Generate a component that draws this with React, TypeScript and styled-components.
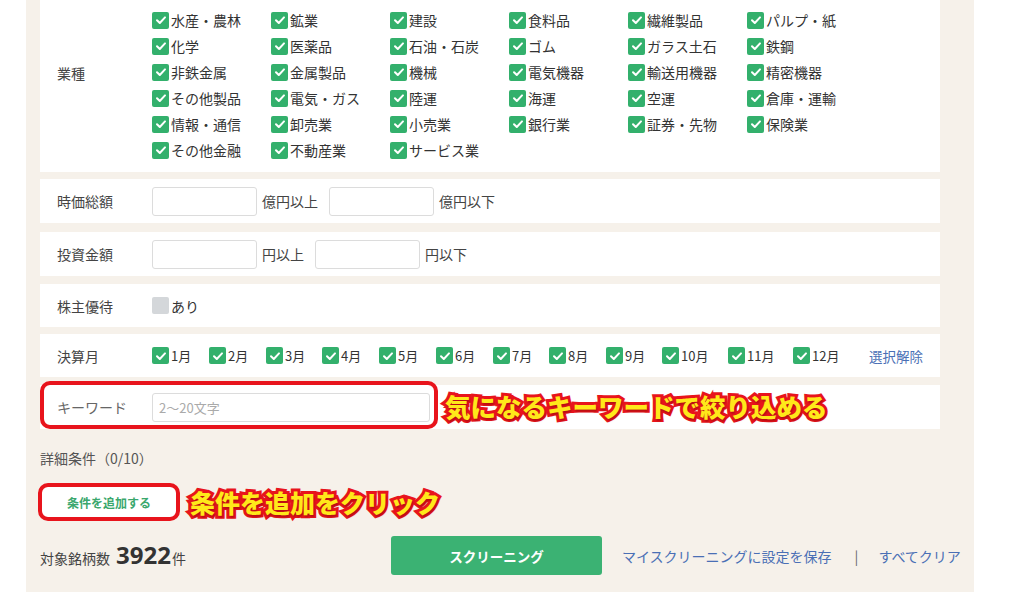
import styled, { createGlobalStyle } from "styled-components";

const GlobalStyle = createGlobalStyle`
  html, body {
    margin: 0;
    padding: 0;
    background: #ffffff;
    font-family: "Noto Sans CJK JP", "Noto Sans", sans-serif;
    color: #333333;
  }
`;

const Page = styled.div`
  width: 1024px;
  height: 606px;
  overflow: hidden;
  padding-left: 26px;
  box-sizing: border-box;
`;

const Panel = styled.div`
  width: 948px;
  height: 592px;
  background: #f6f1ea;
  padding: 0 34px 0 14px;
  box-sizing: border-box;
  display: flex;
  flex-direction: column;
`;

const Box = styled.div<{ $h?: number; $mt?: number }>`
  position: relative;
  background: #ffffff;
  display: flex;
  align-items: center;
  flex: 0 0 auto;
  height: ${({ $h }) => ($h ? `${$h}px` : "44px")};
  margin-top: ${({ $mt }) => ($mt !== undefined ? `${$mt}px` : "8px")};
  padding-left: 17px;
  box-sizing: border-box;
`;

const Label = styled.div<{ $muted?: boolean }>`
  width: 95px;
  flex: 0 0 95px;
  font-size: 14px;
  color: ${({ $muted }) => ($muted ? "#666666" : "#444444")};
`;

const IndustryGrid = styled.div`
  display: grid;
  grid-template-columns: repeat(6, 119px);
  grid-auto-rows: 26px;
  align-items: center;
  align-self: flex-start;
  padding-top: 33px;
`;

const CheckItem = styled.label`
  display: flex;
  align-items: center;
  font-size: 14px;
  color: #333333;
  white-space: nowrap;
`;

const Box16 = styled.span<{ $on?: boolean }>`
  display: inline-flex;
  align-items: center;
  justify-content: center;
  width: 17px;
  height: 17px;
  border-radius: 2px;
  background: ${({ $on }) => ($on ? "#33b06c" : "#d4d7da")};
  margin-right: 2px;
  flex: 0 0 17px;
`;

const MonthRow = styled.div`
  display: flex;
  align-items: center;
`;

const MonthItem = styled(CheckItem)<{ $w: number }>`
  width: ${({ $w }) => $w}px;
  font-size: 13px;
`;

const Clear = styled.a`
  margin-left: 20px;
  font-size: 13.5px;
  color: #4a6fb5;
  cursor: pointer;
`;

const NumInput = styled.input<{ $w?: number }>`
  width: ${({ $w }) => ($w ? `${$w}px` : "105px")};
  height: 29px;
  border: 1px solid #dcdcdc;
  border-radius: 3px;
  box-sizing: border-box;
  padding: 0 6px;
  font-family: inherit;
  font-size: 13px;
  color: #333;
  &::placeholder {
    color: #aaaaaa;
  }
`;

const Unit = styled.span`
  font-size: 14px;
  color: #444444;
  margin: 0 11px 0 5px;
`;

const Ring = styled.div<{ $w: number; $h: number; $l: number; $t: number }>`
  position: absolute;
  left: ${({ $l }) => $l}px;
  top: ${({ $t }) => $t}px;
  width: ${({ $w }) => $w}px;
  height: ${({ $h }) => $h}px;
  border: 4px solid #e8141c;
  border-radius: 10px;
  box-sizing: border-box;
  pointer-events: none;
`;

const Callout = styled.div<{ $l: number; $t: number; $size: number }>`
  position: absolute;
  left: ${({ $l }) => $l}px;
  top: ${({ $t }) => $t}px;
  font-family: "Noto Sans CJK JP", sans-serif;
  font-weight: 900;
  font-size: ${({ $size }) => $size}px;
  line-height: 1;
  color: #ffe81a;
  -webkit-text-stroke: 6px #e8141c;
  paint-order: stroke fill;
  text-shadow: 1px 2px 2px rgba(90, 0, 0, 0.35);
  white-space: nowrap;
  pointer-events: none;
`;

const SubTitle = styled.div`
  margin-top: 19px;
  font-size: 14px;
  color: #555555;
`;

const AddRow = styled.div`
  position: relative;
  margin-top: 17px;
  height: 34px;
`;

const AddButton = styled.button`
  width: 138px;
  height: 34px;
  background: #ffffff;
  border: none;
  border-radius: 8px;
  color: #3aa76d;
  font-family: inherit;
  font-size: 12px;
  font-weight: 700;
  cursor: pointer;
`;

const Footer = styled.div`
  margin-top: 17px;
  display: flex;
  align-items: center;
`;

const Count = styled.div`
  flex: 0 0 351px;
  display: flex;
  align-items: baseline;
  font-size: 14px;
  color: #444444;
  b {
    font-family: "Open Sans", "Noto Sans", sans-serif;
    font-size: 24px;
    font-weight: 700;
    line-height: 1;
    color: #333333;
    margin-left: 6px;
    margin-right: 1px;
  }
  span {
    font-size: 14px;
  }
`;

const ScreenButton = styled.button`
  flex: 0 0 211px;
  height: 39px;
  background: #3bb273;
  border: none;
  border-radius: 3px;
  color: #ffffff;
  font-family: inherit;
  font-size: 13.5px;
  font-weight: 700;
  cursor: pointer;
`;

const Links = styled.div`
  margin-left: 20px;
  flex: 0 0 auto;
  display: flex;
  align-items: center;
  white-space: nowrap;
  font-size: 14px;
  color: #4a6fb5;
  i {
    font-style: normal;
    color: #666;
    margin: 0 20px 0 23px;
  }
`;

const Check = () => (
  <svg width="12" height="12" viewBox="0 0 12 12">
    <path d="M2 6.2 L4.8 9 L10 3.4" fill="none" stroke="#fff" strokeWidth="2" strokeLinecap="round" strokeLinejoin="round" />
  </svg>
);

const industries = [
  ["水産・農林", "鉱業", "建設", "食料品", "繊維製品", "パルプ・紙"],
  ["化学", "医薬品", "石油・石炭", "ゴム", "ガラス土石", "鉄鋼"],
  ["非鉄金属", "金属製品", "機械", "電気機器", "輸送用機器", "精密機器"],
  ["その他製品", "電気・ガス", "陸運", "海運", "空運", "倉庫・運輸"],
  ["情報・通信", "卸売業", "小売業", "銀行業", "証券・先物", "保険業"],
  ["その他金融", "不動産業", "サービス業"],
];

const months = [57, 57, 56, 57, 57, 57, 56, 57, 56, 66, 65, 56];

export default function App() {
  return (
    <>
      <GlobalStyle />
      <Page>
        <Panel>
          <Box $h={198} $mt={-26}>
            <Label>業種</Label>
            <IndustryGrid>
              {industries.flat().map((name) => (
                <CheckItem key={name}>
                  <Box16 $on>
                    <Check />
                  </Box16>
                  {name}
                </CheckItem>
              ))}
            </IndustryGrid>
          </Box>

          <Box $mt={7}>
            <Label>時価総額</Label>
            <NumInput />
            <Unit>億円以上</Unit>
            <NumInput />
            <Unit>億円以下</Unit>
          </Box>

          <Box $mt={9}>
            <Label>投資金額</Label>
            <NumInput />
            <Unit>円以上</Unit>
            <NumInput />
            <Unit>円以下</Unit>
          </Box>

          <Box $h={43}>
            <Label>株主優待</Label>
            <CheckItem>
              <Box16 />
              あり
            </CheckItem>
          </Box>

          <Box $h={43} $mt={7}>
            <Label>決算月</Label>
            <MonthRow>
              {months.map((w, i) => (
                <MonthItem key={i} $w={w}>
                  <Box16 $on>
                    <Check />
                  </Box16>
                  {i + 1}月
                </MonthItem>
              ))}
              <Clear>選択解除</Clear>
            </MonthRow>
          </Box>

          <Box $mt={8}>
            <Label $muted>キーワード</Label>
            <NumInput $w={278} placeholder="2〜20文字" />
            <Ring $l={0} $t={-4} $w={398} $h={48} />
            <Callout $l={405} $t={8} $size={25.5}>気になるキーワードで絞り込める</Callout>
          </Box>

          <SubTitle>詳細条件（0/10）</SubTitle>

          <AddRow>
            <AddButton>条件を追加する</AddButton>
            <Ring $l={-2} $t={-2} $w={142} $h={38} />
            <Callout $l={150} $t={5} $size={25}>条件を追加をクリック</Callout>
          </AddRow>

          <Footer>
            <Count>
              対象銘柄数<b>3922</b>
              <span>件</span>
            </Count>
            <ScreenButton>スクリーニング</ScreenButton>
            <Links>
              <span>マイスクリーニングに設定を保存</span>
              <i>|</i>
              <span>すべてクリア</span>
            </Links>
          </Footer>
        </Panel>
      </Page>
    </>
  );
}
